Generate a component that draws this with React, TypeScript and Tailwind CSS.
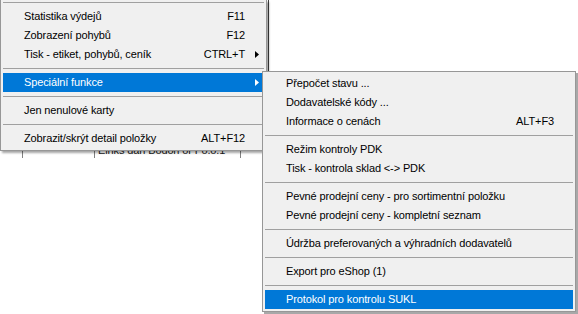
import React from "react";

type Item =
  | { kind: "sep" }
  | { kind: "item"; label: string; shortcut?: string; arrow?: boolean; active?: boolean };

const mainItems: Item[] = [
  { kind: "item", label: "Statistika výdejů", shortcut: "F11" },
  { kind: "item", label: "Zobrazení pohybů", shortcut: "F12" },
  { kind: "item", label: "Tisk - etiket, pohybů, ceník", shortcut: "CTRL+T", arrow: true },
  { kind: "sep" },
  { kind: "item", label: "Speciální funkce", arrow: true, active: true },
  { kind: "sep" },
  { kind: "item", label: "Jen nenulové karty" },
  { kind: "sep" },
  { kind: "item", label: "Zobrazit/skrýt detail položky", shortcut: "ALT+F12" },
];

const subItems: Item[] = [
  { kind: "item", label: "Přepočet stavu ..." },
  { kind: "item", label: "Dodavatelské kódy ..." },
  { kind: "item", label: "Informace o cenách", shortcut: "ALT+F3" },
  { kind: "sep" },
  { kind: "item", label: "Režim kontroly PDK" },
  { kind: "item", label: "Tisk - kontrola sklad <-> PDK" },
  { kind: "sep" },
  { kind: "item", label: "Pevné prodejní ceny - pro sortimentní položku" },
  { kind: "item", label: "Pevné prodejní ceny - kompletní seznam" },
  { kind: "sep" },
  { kind: "item", label: "Údržba preferovaných a výhradních dodavatelů" },
  { kind: "sep" },
  { kind: "item", label: "Export pro eShop (1)" },
  { kind: "sep" },
  { kind: "item", label: "Protokol pro kontrolu SUKL", active: true },
];

const Arrow = ({ white }: { white?: boolean }) => (
  <svg width="4" height="7" viewBox="0 0 4 7" className="absolute right-[5px] top-[6px]">
    <path d="M0 0 L4 3.5 L0 7 Z" fill={white ? "#ffffff" : "#000000"} />
  </svg>
);

const MenuRows = ({ items }: { items: Item[] }) => (
  <>
    {items.map((it, i) =>
      it.kind === "sep" ? (
        <div key={i} className="h-[9px] flex items-center">
          <div className="h-px w-full bg-[#a0a0a0]" />
        </div>
      ) : (
        <div
          key={i}
          className={
            "relative h-[19px] flex items-center pl-[21px] pr-[19px] " +
            (it.active ? "bg-[#0078d7] text-white" : "text-black")
          }
        >
          <span className="flex-1 whitespace-nowrap">{it.label}</span>
          {it.shortcut && <span className="whitespace-nowrap">{it.shortcut}</span>}
          {it.arrow && <Arrow white={it.active} />}
        </div>
      )
    )}
  </>
);

export default function App() {
  return (
    <div
      className="relative w-[578px] h-[314px] bg-white overflow-hidden text-[11px] leading-none tracking-[-0.12px]"
      style={{ fontFamily: '"Liberation Sans", Arial, sans-serif' }}
    >
      {/* table underneath the menus */}
      <div className="flex flex-col">
        <div className="h-[144px] flex">
          <div className="w-[268px]" />
          <div className="w-px h-[71px] bg-[#404040]" />
        </div>
        <div className="h-[14px] flex text-[#202020] whitespace-nowrap">
          <div className="w-[22px]" />
          <div className="w-[72px] border-l border-[#808080]" />
          <div className="w-[146px] border-l border-[#808080] pl-[3px] pt-[1px]">Einks dan Bodon or Fo.o.1</div>
          <div className="w-[28px] border-l border-[#808080]" />
        </div>
      </div>

      {/* main menu */}
      <div className="absolute left-0 top-0 w-[267px] bg-[#f0f0f0] border-l border-r border-b border-[#979797] px-[2px] pb-[2px] shadow-[2px_2px_2px_rgba(0,0,0,0.35)]">
        <div className="h-[7px] flex items-start pt-[2px]">
          <div className="h-px w-full bg-[#a0a0a0]" />
        </div>
        <MenuRows items={mainItems} />
      </div>

      {/* submenu */}
      <div className="absolute left-[262px] top-[71px] w-[314px] bg-[#f0f0f0] border border-[#979797] p-[2px] shadow-[2px_2px_0_#a8a8a8]">
        <MenuRows items={subItems} />
      </div>
    </div>
  );
}
